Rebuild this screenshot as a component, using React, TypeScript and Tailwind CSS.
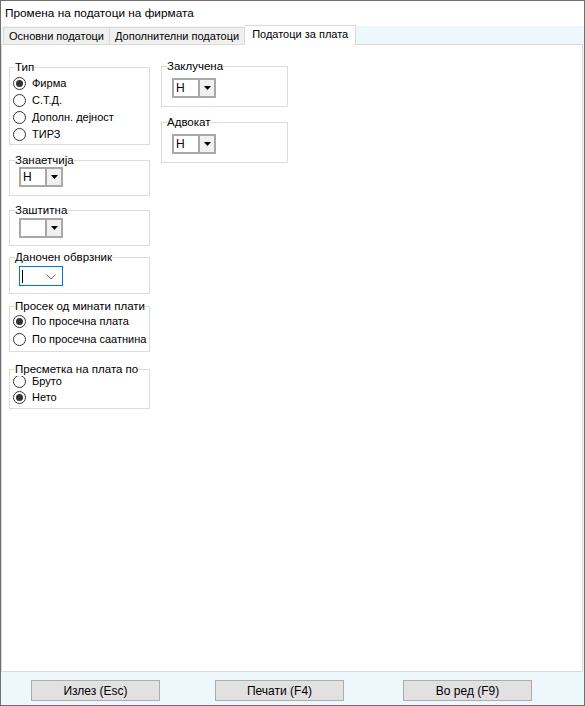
import type { ReactNode } from "react";

const font = { fontFamily: '"Liberation Sans", Arial, sans-serif' };

function Radio({ label, checked, tight }: { label: string; checked?: boolean; tight?: boolean }) {
  return (
    <div className={`flex items-center ${tight ? "h-[16px]" : "h-[17px]"}`}>
      <span className="flex size-[13px] shrink-0 items-center justify-center rounded-full border border-[#333] bg-white">
        {checked && <span className="size-[7px] rounded-full bg-[#333]" />}
      </span>
      <span className="ml-[6px] whitespace-nowrap">{label}</span>
    </div>
  );
}

function Combo({ value }: { value: string }) {
  return (
    <div className="flex h-[20px] w-[44px] border-2 border-[#a8a8a8] bg-white">
      <span className="flex-1 pl-[2px] text-[12px] leading-[16px]">{value}</span>
      <span className="flex w-[16px] items-center justify-center border-l-2 border-[#a8a8a8] bg-[#f0f0f0]">
        <svg width="7" height="4" viewBox="0 0 7 4">
          <path d="M0 0h7L3.5 4z" fill="#000" />
        </svg>
      </span>
    </div>
  );
}

function Group({ title, className, children }: { title: string; className: string; children: ReactNode }) {
  return (
    <div className={`relative border border-[#dcdcdc] ${className}`}>
      <span className="absolute -top-[8px] left-[5px] whitespace-nowrap bg-white text-[11.5px] leading-[14px]">{title}</span>
      {children}
    </div>
  );
}

export default function App() {
  return (
    <div
      className="flex h-[706px] w-[585px] flex-col border border-[#707070] bg-[#eef7fb] text-[11px] text-black"
      style={font}
    >
      {/* Title */}
      <div className="h-[25px] bg-white pl-[4px] pt-[5px] text-[11.8px] leading-[15px]">
        Промена на податоци на фирмата
      </div>

      {/* Tabs */}
      <div className="flex h-[18px] items-end pl-[2px]">
        <div className="h-[17px] border border-b-0 border-[#d9d9d9] bg-[#f0f0f0] px-[5px] leading-[16px]">
          Основни податоци
        </div>
        <div className="h-[17px] border border-b-0 border-l-0 border-[#d9d9d9] bg-[#f0f0f0] px-[5px] leading-[16px]">
          Дополнителни податоци
        </div>
        <div className="relative z-10 -mb-px h-[20px] border border-b-0 border-l-0 border-[#d9d9d9] bg-white px-[7px] leading-[17px]">
          Податоци за плата
        </div>
      </div>

      {/* Tab page */}
      <div className="mr-px flex h-[628px] items-start gap-[11px] border border-[#d9d9d9] bg-white pl-[7px]">
        <div className="mt-[22px] flex w-[141px] flex-col">
          <Group title="Тип" className="h-[78px] pl-[3px] pt-[7px]">
            <Radio label="Фирма" checked />
            <Radio label="С.Т.Д." />
            <Radio label="Дополн. дејност" />
            <Radio label="ТИРЗ" />
          </Group>
          <Group title="Занаетчија" className="mt-[15px] h-[36px] pl-[9px] pt-[6px]">
            <Combo value="Н" />
          </Group>
          <Group title="Заштитна" className="mt-[14px] h-[36px] pl-[9px] pt-[7px]">
            <Combo value="" />
          </Group>
          <Group title="Даночен обврзник" className="mt-[11px] h-[37px] pl-[9px] pt-[8px]">
            <div className="relative flex h-[20px] w-[44px] items-center border border-[#0078d7] bg-white">
              <span className="ml-[2px] h-[13px] w-px bg-black" />
              <svg className="absolute right-[6px] top-[7px]" width="10" height="6" viewBox="0 0 10 6">
                <path d="M0.5 0.5L5 5L9.5 0.5" fill="none" stroke="#666" strokeWidth="1" />
              </svg>
            </div>
          </Group>
          <Group title="Просек од минати плати" className="mt-[12px] h-[46px] pl-[3px] pt-[6px]">
            <div className="flex flex-col gap-px">
              <Radio label="По просечна плата" checked />
              <Radio label="По просечна саатнина" />
            </div>
          </Group>
          <Group title="Пресметка на плата по" className="mt-[17px] h-[40px] pl-[3px] pt-[3px]">
            <Radio label="Бруто" tight />
            <Radio label="Нето" checked tight />
          </Group>
        </div>

        <div className="mt-[21px] flex w-[127px] flex-col">
          <Group title="Заклучена" className="h-[41px] pl-[10px] pt-[11px]">
            <Combo value="Н" />
          </Group>
          <Group title="Адвокат" className="mt-[15px] h-[41px] pl-[10px] pt-[11px]">
            <Combo value="Н" />
          </Group>
        </div>
      </div>

      {/* Buttons */}
      <div className="flex flex-1 items-start pl-[30px] pt-[8px] text-[12px]">
        <button type="button" className="h-[21px] w-[129px] border border-[#adadad] bg-[#e1e1e1]">
          Излез (Esc)
        </button>
        <button type="button" className="ml-[55px] h-[21px] w-[129px] border border-[#adadad] bg-[#e1e1e1]">
          Печати (F4)
        </button>
        <button type="button" className="ml-[59px] h-[21px] w-[129px] border border-[#adadad] bg-[#e1e1e1]">
          Во ред (F9)
        </button>
      </div>
    </div>
  );
}
